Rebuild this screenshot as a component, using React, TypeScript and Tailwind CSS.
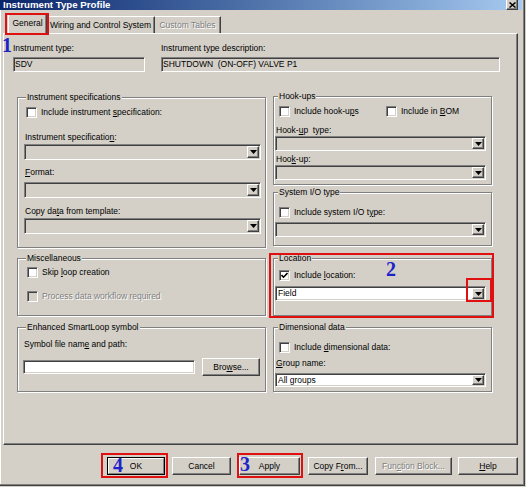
import React from "react";

const SUNKEN =
  "border border-t-[#808080] border-l-[#808080] border-b-white border-r-white shadow-[inset_1px_1px_0_#404040,inset_-1px_-1px_0_#d4d0c8]";
const RAISED =
  "border border-t-white border-l-white border-b-[#404040] border-r-[#404040] shadow-[inset_-1px_-1px_0_#808080]";
const DIS = "text-[#808080] [text-shadow:1px_1px_0_#fff]";
const NUM =
  "absolute font-['Liberation_Serif',serif] font-bold text-[20px] leading-none text-[#1e22c8]";
const RED = "absolute border-2 border-[#e01010] pointer-events-none";

function U({ children }: { children: React.ReactNode }) {
  return <span className="underline underline-offset-[1px]">{children}</span>;
}

function Arrow() {
  return (
    <svg width="7" height="4" viewBox="0 0 7 4">
      <path d="M0 0H7L3.5 4Z" fill="#000" />
    </svg>
  );
}

function Combo({
  className = "",
  h = "h-[16px]",
  value,
  white = false,
}: {
  className?: string;
  h?: string;
  value?: string;
  white?: boolean;
}) {
  return (
    <div
      className={`flex p-[1px] ${h} ${SUNKEN} ${white ? "bg-white" : "bg-[#d4d0c8]"} ${className}`}
    >
      <div className="flex-1 flex items-center pl-[1px] overflow-hidden whitespace-nowrap">
        {value}
      </div>
      <div
        className={`w-[12px] h-full flex items-center justify-center bg-[#d4d0c8] ${RAISED}`}
      >
        <Arrow />
      </div>
    </div>
  );
}

function Check({ checked = false, disabled = false }: { checked?: boolean; disabled?: boolean }) {
  return (
    <div
      className={`w-[11px] h-[11px] shrink-0 flex items-center justify-center ${SUNKEN} ${
        disabled ? "bg-[#d4d0c8]" : "bg-white"
      }`}
    >
      {checked && (
        <svg width="7" height="7" viewBox="0 0 7 7">
          <polyline points="0.5,3 2.5,5.2 6.5,1" fill="none" stroke="#000" strokeWidth="1.6" />
        </svg>
      )}
    </div>
  );
}

function CheckRow({
  label,
  checked = false,
  disabled = false,
  className = "",
}: {
  label: React.ReactNode;
  checked?: boolean;
  disabled?: boolean;
  className?: string;
}) {
  return (
    <div className={`flex items-center gap-[4px] h-[11px] ${className}`}>
      <Check checked={checked} disabled={disabled} />
      <span className={`whitespace-nowrap ${disabled ? DIS : ""}`}>{label}</span>
    </div>
  );
}

function Group({
  title,
  titleLeft,
  className = "",
  children,
}: {
  title: string;
  titleLeft: string;
  className?: string;
  children: React.ReactNode;
}) {
  return (
    <div
      className={`relative border border-[#808080] shadow-[inset_1px_1px_0_#fff,1px_1px_0_#fff] ${className}`}
    >
      <span
        className={`absolute -top-[6px] ${titleLeft} px-[1px] bg-[#d4d0c8] leading-[11px] whitespace-nowrap`}
      >
        {title}
      </span>
      {children}
    </div>
  );
}

function Btn({
  children,
  className = "",
  disabled = false,
}: {
  children: React.ReactNode;
  className?: string;
  disabled?: boolean;
}) {
  return (
    <div
      className={`h-[18px] flex items-center justify-center whitespace-nowrap ${RAISED} ${
        disabled ? DIS : ""
      } ${className}`}
    >
      {children}
    </div>
  );
}

export default function App() {
  return (
    <div className="w-[526px] h-[487px] overflow-hidden bg-[#d4d0c8] font-['Liberation_Sans',Arial,sans-serif] text-[8.5px] leading-[11px] text-black">
      <div className="relative flex flex-col w-[525px] h-[486px] border-r border-b border-[#404040] shadow-[inset_-1px_-1px_0_#808080,inset_1px_0_0_#fff]">
        {/* Title bar */}
        <div className="flex justify-between w-[522px] h-[10px] shrink-0 bg-linear-to-r from-[#0a246a] to-[#a6caf0] overflow-hidden">
          <span className="pl-[3px] text-white font-bold text-[9.7px] leading-[9px] whitespace-nowrap">
            Instrument Type Profile
          </span>
          <div className="mr-[4px] w-[12px] h-[10px] flex items-center justify-center bg-[#d4d0c8] border-l border-l-white border-r border-r-[#404040] border-b border-b-[#404040] shadow-[inset_-1px_-1px_0_#808080]">
            <svg width="7" height="6" viewBox="0 0 7 6">
              <path d="M0.5 0.5L6.5 5.5M6.5 0.5L0.5 5.5" stroke="#000" strokeWidth="1.5" />
            </svg>
          </div>
        </div>

        {/* Tabs */}
        <div className="relative z-10 flex items-end h-[21px] mt-[3px] -mb-[1px] pl-[8px] shrink-0">
          <div className="relative w-[39px] h-[20px] bg-[#d4d0c8] border-t border-l border-r border-t-white border-l-white border-r-[#404040] shadow-[inset_-1px_0_0_#808080] flex justify-center pt-[3px]">
            General
            <div className={`${RED} -left-[4px] -right-[3px] -top-[2px] -bottom-[1px]`} />
          </div>
          <div className="w-[108px] h-[17px] mb-[1px] border-t border-r border-t-white border-r-[#404040] shadow-[inset_-1px_0_0_#808080] flex items-center justify-center whitespace-nowrap">
            Wiring and Control System
          </div>
          <div
            className={`w-[66px] h-[17px] mb-[1px] border-t border-r border-t-white border-r-[#404040] shadow-[inset_-1px_0_0_#808080] flex items-center justify-center whitespace-nowrap ${DIS}`}
          >
            Custom Tables
          </div>
        </div>

        {/* Panel */}
        <div className="relative ml-[3px] w-[515px] h-[412px] shrink-0 border border-t-white border-l-white border-r-[#404040] border-b-[#404040] shadow-[inset_-1px_-1px_0_#808080]">
          <span className={`${NUM} -left-[2px] top-[1px]`}>1</span>
          <div className="pl-[9px] pt-[9px]">
            {/* Top row */}
            <div className="flex gap-[16px]">
              <div className="w-[132px]">
                <div>Instrument type:</div>
                <div className={`mt-[3px] h-[15px] flex items-center pl-[1px] ${SUNKEN}`}>SDV</div>
              </div>
              <div className="w-[339px]">
                <div>Instrument type description:</div>
                <div className={`mt-[3px] h-[15px] flex items-center pl-[1px] whitespace-pre ${SUNKEN}`}>
                  SHUTDOWN  (ON-OFF) VALVE P1
                </div>
              </div>
            </div>

            {/* Columns */}
            <div className="flex ml-[4px] gap-[7px]">
              {/* Left column */}
              <div className="w-[249px] flex flex-col mt-[25px]">
                <Group title="Instrument specifications" titleLeft="left-[8px]" className="h-[151px]">
                  <div className="flex flex-col pl-[6px] pt-[9px]">
                    <CheckRow
                      className="ml-[2px]"
                      label={
                        <>
                          Include instrument <U>s</U>pecification:
                        </>
                      }
                    />
                    <div className="ml-[1px] mt-[14px]">
                      Instrument specificatio<U>n</U>:
                    </div>
                    <Combo className="mt-[1px] w-[237px]" />
                    <div className="ml-[1px] mt-[7px]">
                      <U>F</U>ormat:
                    </div>
                    <Combo className="mt-[4px] w-[237px]" />
                    <div className="ml-[1px] mt-[8px]">
                      Copy da<U>t</U>a from template:
                    </div>
                    <Combo className="mt-[1px] w-[237px]" />
                  </div>
                </Group>

                <Group title="Miscellaneous" titleLeft="left-[8px]" className="mt-[10px] h-[58px]">
                  <div className="flex flex-col pl-[9px] pt-[8px]">
                    <CheckRow
                      label={
                        <>
                          Skip <U>l</U>oop creation
                        </>
                      }
                    />
                    <CheckRow disabled className="mt-[13px]" label="Process data workflow required" />
                  </div>
                </Group>

                <Group title="Enhanced SmartLoop symbol" titleLeft="left-[8px]" className="mt-[11px] h-[65px]">
                  <div className="flex flex-col pl-[5px] pt-[11px]">
                    <div className="ml-[1px]">
                      Symbol file nam<U>e</U> and path:
                    </div>
                    <div className="flex items-center mt-[8px] h-[18px]">
                      <div className={`w-[172px] h-[14px] bg-white ${SUNKEN}`} />
                      <Btn className="ml-[7px] w-[58px]">
                        Bro<U>w</U>se...
                      </Btn>
                    </div>
                  </div>
                </Group>
              </div>

              {/* Right column */}
              <div className="w-[219px] flex flex-col mt-[24px]">
                <Group title="Hook-ups" titleLeft="left-[4px]" className="h-[89px]">
                  <div className="flex flex-col pl-[1px] pt-[9px]">
                    <div className="flex ml-[4px]">
                      <CheckRow
                        className="w-[107px]"
                        label={
                          <>
                            Include hook-u<U>p</U>s
                          </>
                        }
                      />
                      <CheckRow
                        label={
                          <>
                            Include in <U>B</U>OM
                          </>
                        }
                      />
                    </div>
                    <div className="ml-[1px] mt-[8px] whitespace-pre">
                      Hook-<U>u</U>p  type:
                    </div>
                    <Combo className="w-[211px]" h="h-[15px]" />
                    <div className="ml-[1px] mt-[3px]">
                      Hoo<U>k</U>-up:
                    </div>
                    <Combo className="w-[211px]" h="h-[15px]" />
                  </div>
                </Group>

                <Group title="System I/O type" titleLeft="left-[4px]" className="mt-[7px] h-[54px]">
                  <div className="flex flex-col pl-[1px] pt-[14px]">
                    <CheckRow
                      className="ml-[4px]"
                      label={
                        <>
                          Include system I/O t<U>y</U>pe:
                        </>
                      }
                    />
                    <Combo className="mt-[4px] w-[211px]" h="h-[15px]" />
                  </div>
                </Group>

                <Group title="Location" titleLeft="left-[4px]" className="mt-[12px] h-[58px]">
                  <div className="flex flex-col pl-[1px] pt-[11px]">
                    <CheckRow
                      checked
                      className="ml-[4px]"
                      label={
                        <>
                          Include <U>l</U>ocation:
                        </>
                      }
                    />
                    <Combo white value="Field" className="mt-[5px] w-[211px]" h="h-[15px]" />
                  </div>
                  <div className={`${RED} -left-[5px] -top-[6px] -right-[3px] -bottom-[3px]`} />
                  <div className={`${RED} left-[192px] top-[19px] w-[26px] h-[24px]`} />
                  <span className={`${NUM} left-[112px] top-0 text-[19px]`}>2</span>
                </Group>

                <Group title="Dimensional data" titleLeft="left-[4px]" className="mt-[11px] h-[65px]">
                  <div className="flex flex-col pl-[1px] pt-[14px]">
                    <CheckRow
                      className="ml-[4px]"
                      label={
                        <>
                          Include <U>d</U>imensional data:
                        </>
                      }
                    />
                    <div className="ml-[1px] mt-[5px]">
                      <U>G</U>roup name:
                    </div>
                    <Combo white value="All groups" className="mt-[4px] w-[211px]" h="h-[14px]" />
                  </div>
                </Group>
              </div>
            </div>
          </div>
        </div>

        {/* Buttons */}
        <div className="flex mt-[12px] h-[18px] pl-[107px] shrink-0">
          <div className="relative w-[58px] h-[18px] border border-black">
            <div className="h-full flex items-center justify-center border border-t-white border-l-white border-b-[#808080] border-r-[#808080]">
              OK
            </div>
            <div className={`${RED} -left-[7px] -top-[5px] -right-[4px] -bottom-[4px]`} />
            <span className={`${NUM} left-[5px] -top-[3px]`}>4</span>
          </div>
          <Btn className="ml-[7px] w-[59px]">Cancel</Btn>
          <div className="relative ml-[8px] w-[61px]">
            <Btn className="w-[61px]">Apply</Btn>
            <div className={`${RED} -left-[2px] -top-[4px] -right-[3px] -bottom-[3px]`} />
            <span className={`${NUM} left-[1px] -top-[3px]`}>3</span>
          </div>
          <Btn className="ml-[8px] w-[60px]">
            Copy F<U>r</U>om...
          </Btn>
          <Btn disabled className="ml-[7px] w-[77px]">
            Fun<U>c</U>tion Block...
          </Btn>
          <Btn className="ml-[6px] w-[60px]">
            <U>H</U>elp
          </Btn>
        </div>
      </div>
    </div>
  );
}
